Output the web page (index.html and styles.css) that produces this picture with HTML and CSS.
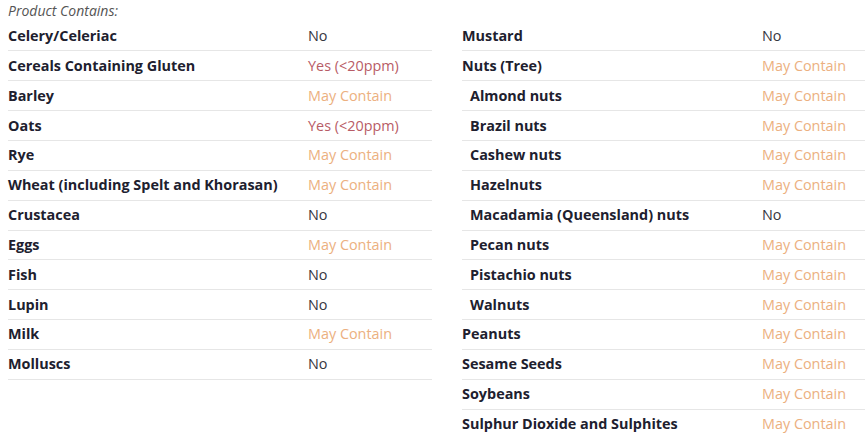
FILE: index.html
```html
<!DOCTYPE html>
<html lang="en">
<head>
<meta charset="utf-8">
<title>Allergens</title>
<link rel="stylesheet" href="styles.css">
</head>
<body>
<div class="page">
  <div class="title">Product Contains:</div>
  <div class="cols">
    <div class="col">
      <div class="row"><span class="label">Celery/Celeriac</span><span class="val no">No</span></div>
      <div class="row"><span class="label">Cereals Containing Gluten</span><span class="val yes">Yes (&lt;20ppm)</span></div>
      <div class="row"><span class="label">Barley</span><span class="val may">May Contain</span></div>
      <div class="row"><span class="label">Oats</span><span class="val yes">Yes (&lt;20ppm)</span></div>
      <div class="row"><span class="label">Rye</span><span class="val may">May Contain</span></div>
      <div class="row"><span class="label">Wheat (including Spelt and Khorasan)</span><span class="val may">May Contain</span></div>
      <div class="row"><span class="label">Crustacea</span><span class="val no">No</span></div>
      <div class="row"><span class="label">Eggs</span><span class="val may">May Contain</span></div>
      <div class="row"><span class="label">Fish</span><span class="val no">No</span></div>
      <div class="row"><span class="label">Lupin</span><span class="val no">No</span></div>
      <div class="row"><span class="label">Milk</span><span class="val may">May Contain</span></div>
      <div class="row"><span class="label">Molluscs</span><span class="val no">No</span></div>
    </div>
    <div class="col">
      <div class="row"><span class="label">Mustard</span><span class="val no">No</span></div>
      <div class="row"><span class="label">Nuts (Tree)</span><span class="val may">May Contain</span></div>
      <div class="row"><span class="label sub">Almond nuts</span><span class="val may">May Contain</span></div>
      <div class="row"><span class="label sub">Brazil nuts</span><span class="val may">May Contain</span></div>
      <div class="row"><span class="label sub">Cashew nuts</span><span class="val may">May Contain</span></div>
      <div class="row"><span class="label sub">Hazelnuts</span><span class="val may">May Contain</span></div>
      <div class="row"><span class="label sub">Macadamia (Queensland) nuts</span><span class="val no">No</span></div>
      <div class="row"><span class="label sub">Pecan nuts</span><span class="val may">May Contain</span></div>
      <div class="row"><span class="label sub">Pistachio nuts</span><span class="val may">May Contain</span></div>
      <div class="row"><span class="label sub">Walnuts</span><span class="val may">May Contain</span></div>
      <div class="row"><span class="label">Peanuts</span><span class="val may">May Contain</span></div>
      <div class="row"><span class="label">Sesame Seeds</span><span class="val may">May Contain</span></div>
      <div class="row"><span class="label">Soybeans</span><span class="val may">May Contain</span></div>
      <div class="row"><span class="label">Sulphur Dioxide and Sulphites</span><span class="val may">May Contain</span></div>
    </div>
  </div>
</div>
</body>
</html>
```

FILE: styles.css
```css
html, body {
  margin: 0;
  padding: 0;
  background: #ffffff;
  overflow: hidden;
}
.page {
  padding: 1px 0 0 8px;
  font-family: "Open Sans", "Liberation Sans", sans-serif;
  font-size: 14.4px;
  line-height: 20px;
  color: #333333;
  width: 900px;
}
.title {
  font-style: italic;
  font-size: 14px;
  color: #555555;
  height: 20.6px;
}
.cols {
  display: flex;
  gap: 30px;
  align-items: flex-start;
}
.col {
  width: 424px;
  display: flex;
  flex-direction: column;
}
.row {
  display: flex;
  padding: 4.43px 0 4.43px 0;
  border-bottom: 1px solid #e6e6e6;
}
.label {
  width: 300px;
  font-weight: 700;
  color: #20202e;
}
.label.sub {
  padding-left: 8px;
  width: 292px;
}
.val.no { color: #363640; }
.val.yes { color: #b85c66; }
.val.may { color: #ecb080; }
```
